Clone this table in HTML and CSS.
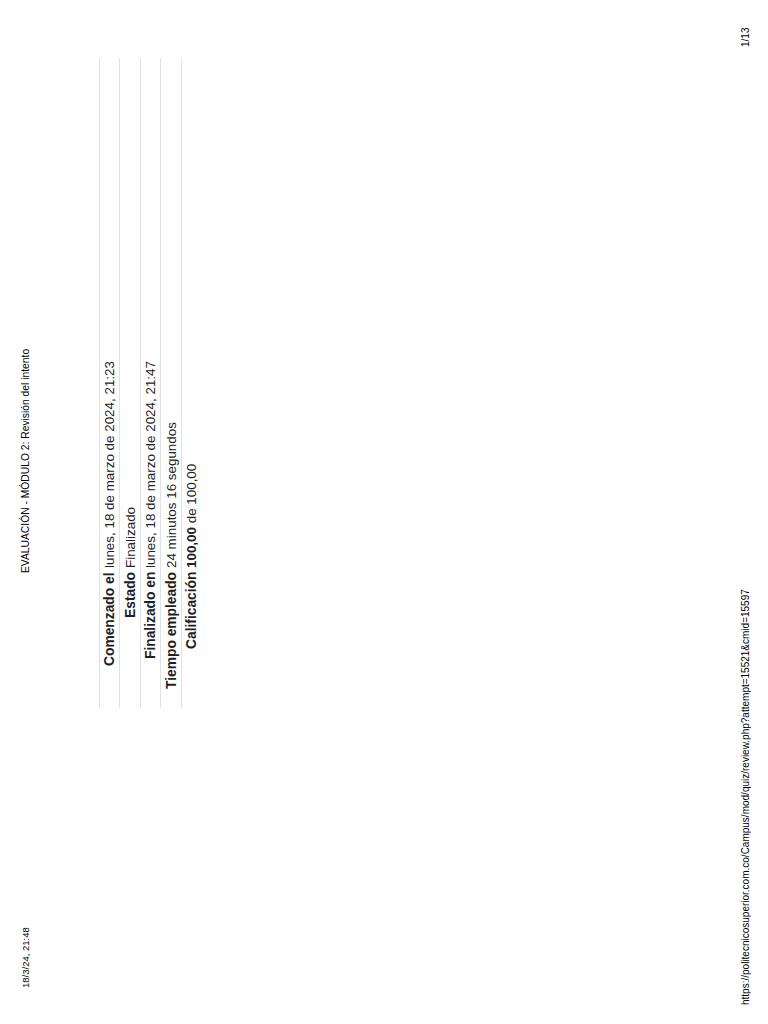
FILE: index.html
```html
<!DOCTYPE html>
<html lang="es">
<head>
<meta charset="utf-8">
<title>EVALUACIÓN - MÓDULO 2: Revisión del intento</title>
<link rel="stylesheet" href="styles.css">
</head>
<body>
<div class="sheet">
  <header class="print-head">
    <span class="date">18/3/24, 21:48</span>
    <span class="title">EVALUACIÓN - MÓDULO 2: Revisión del intento</span>
  </header>
  <main class="content">
    <table class="summary">
      <tbody>
        <tr><th>Comenzado el</th><td>lunes, 18 de marzo de 2024, 21:23</td></tr>
        <tr><th>Estado</th><td>Finalizado</td></tr>
        <tr><th>Finalizado en</th><td>lunes, 18 de marzo de 2024, 21:47</td></tr>
        <tr><th>Tiempo empleado</th><td>24 minutos 16 segundos</td></tr>
        <tr><th>Calificación</th><td><b>100,00</b> de 100,00</td></tr>
      </tbody>
    </table>
  </main>
  <footer class="print-foot">
    <span class="url">https://politecnicosuperior.com.co/Campus/mod/quiz/review.php?attempt=15521&amp;cmid=15597</span>
    <span class="pageno">1/13</span>
  </footer>
</div>
</body>
</html>
```

FILE: styles.css
```css
html, body {
  margin: 0;
  padding: 0;
  background: #fff;
}

body {
  font-family: "Liberation Sans", Arial, sans-serif;
  color: #000;
}

/* A landscape printed page shown sideways: vertical-rl turned half a turn
   makes lines read bottom-to-top and the page top sit on the left. */
.sheet {
  writing-mode: vertical-rl;
  transform: rotate(180deg);
  inline-size: 1024px;
  block-size: 768px;
  display: flex;
  flex-direction: column;
  overflow: hidden;
}

.print-head {
  block-size: 50px;
  display: grid;
  grid-template-columns: 415px auto;
  align-items: center;
  padding-inline-start: 36px;
  font-size: 9.5px;
}

.print-head .title {
  font-size: 10.3px;
}

.content {
  padding-block-start: 49px;
  padding-inline-start: 316px;
  padding-inline-end: 58px;
}

.summary {
  inline-size: 650px;
  border-collapse: collapse;
  color: #1d2125;
}

.summary tr {
  border-block-start: 1px solid #dee2e6;
}

.summary th {
  box-sizing: border-box;
  inline-size: 138px;
  text-align: end;
  font-weight: bold;
  font-size: 13.8px;
  white-space: nowrap;
  padding: 0;
  padding-inline-end: 2px;
  line-height: 19.5px;
}

.summary td {
  text-align: start;
  font-size: 13.4px;
  padding: 0;
  padding-inline-start: 2px;
  line-height: 19.5px;
}

.print-foot {
  margin-block-start: auto;
  block-size: 46px;
  display: flex;
  justify-content: space-between;
  align-items: center;
  padding-inline-start: 19px;
  padding-inline-end: 28px;
  font-size: 10px;
}
```
